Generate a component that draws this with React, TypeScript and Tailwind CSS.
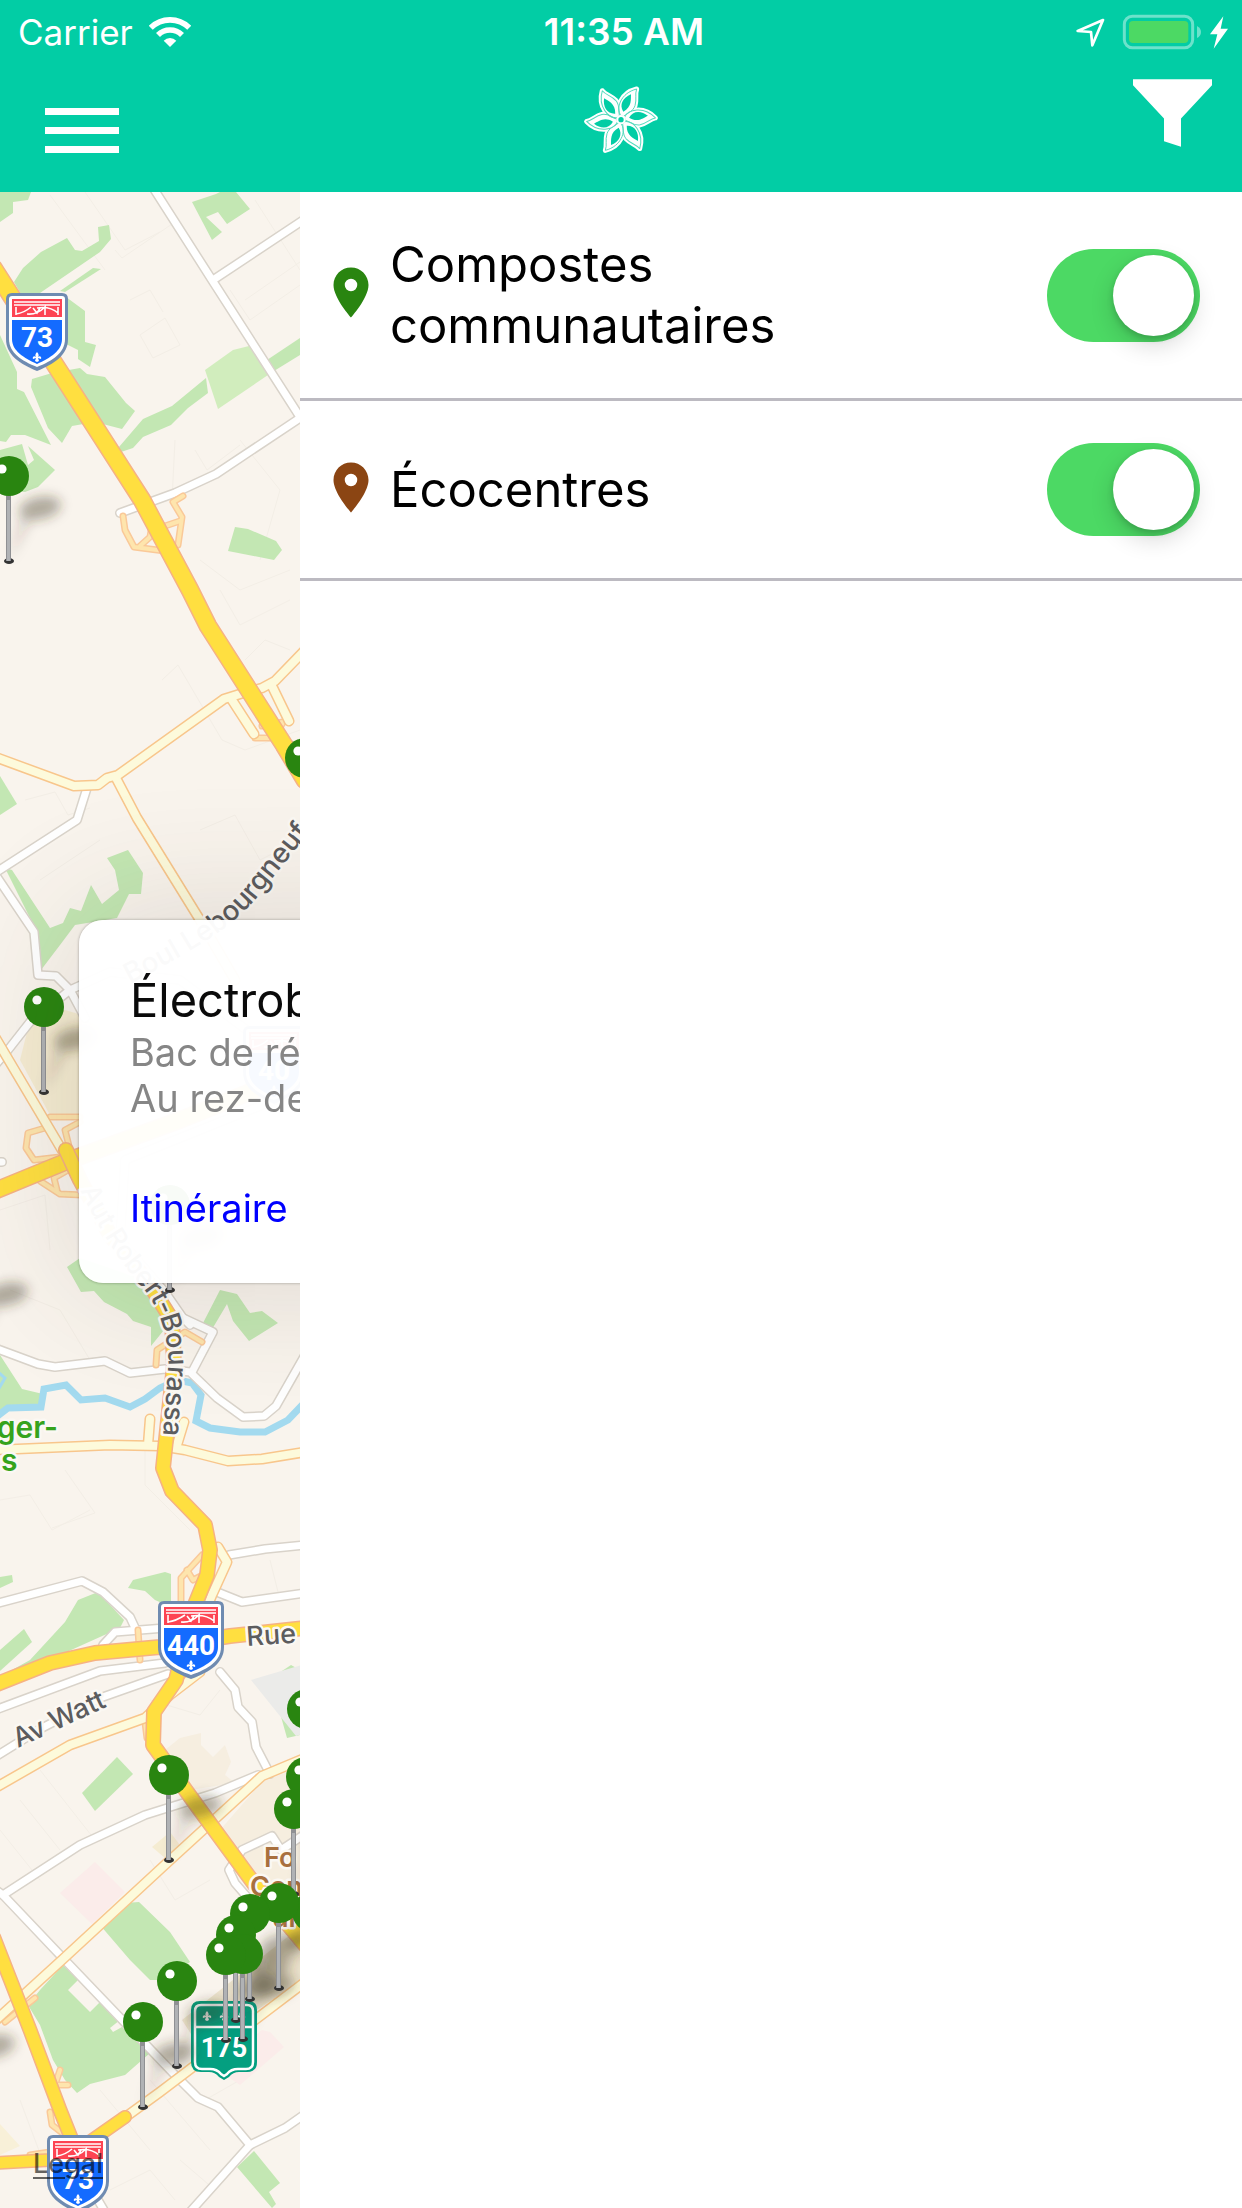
import { useState } from 'react';

const layers = [
  { id: 'composts', name: 'Compostes communautaires', color: '#298510', row: 'h-[209px]' },
  { id: 'ecocentres', name: 'Écocentres', color: '#8b4513', row: 'h-[180px]' },
];

const parks = [
  '0,192 31,192 28,200 13,202 13,213 0,222',
  '14,282 23,268 41,252 67,238 75,250 82,251 99,241 98,227 109,225 111,239 100,252 40,293 22,296',
  '60,291 93,268 101,269 65,292',
  '66,297 85,311 85,342 96,345 90,367 78,359 78,350 66,344',
  '0,335 17,372 17,389 24,392 51,445 25,435 11,435 6,442 0,441',
  '32,379 52,373 80,368 87,374 105,377 126,403 135,411 122,429 95,422 72,426 62,443 48,428 31,387',
  '119,447 143,419 172,406 206,378 208,393 188,408 171,425 143,437 133,448 121,452',
  '267,360 300,338 300,355 274,371',
  '192,202 216,194 220,192 236,192 250,209 227,224 218,212 206,217 222,232 212,240',
  '235,527 248,529 276,541 282,550 274,560 228,551',
  '0,450 22,444 28,465 34,460 28,446 55,470 38,487 25,492 0,490',
  '0,776 17,804 0,815',
  '5,868 12,870 50,928 63,923 70,908 81,911 91,885 102,904 119,890 115,870 107,858 128,850 143,873 141,894 129,894 117,918 75,925 60,945 41,970 36,930',
  '67,1267 80,1258 130,1275 150,1285 168,1325 151,1346 151,1327 133,1321 127,1314 104,1302 94,1291 81,1292',
  '203,1323 220,1290 237,1294 250,1313 262,1311 278,1323 249,1341 233,1321 227,1304 211,1331',
  '0,1355 22,1389 43,1394 41,1408 12,1405 0,1415',
  '0,1577 12,1575 13,1582 0,1588',
  '128,1588 133,1580 165,1572 171,1574 171,1607 155,1600 145,1591',
  '65,1622 78,1600 98,1592 124,1620 120,1628 60,1655 40,1662 12,1670 30,1660',
  '0,1650 24,1629 32,1642 0,1671',
  '82,1793 117,1757 133,1774 95,1811',
  '280,1713 300,1720 300,1735 287,1738',
  '282,1671 291,1665 300,1670 300,1685',
  '100,1925 125,1903 139,1902 170,1932 190,1962 175,1972 165,1980 150,1980 130,1960',
  '63,1965 78,1980 68,1990 90,2012 100,2002 120,2020 110,2028 113,2032 122,2027 150,2053 125,2075 90,2084 77,2093 65,2080 53,2060 40,2025 28,2005 40,1990',
  '237,2167 254,2151 280,2183 269,2192 276,2204 272,2208',
];

const sideStreets = [
  '50,195 105,270', '85,192 125,250 160,232', '115,250 122,258 175,222 195,250', '140,335 165,318 180,345 153,358 140,335',
  '130,300 150,290 163,312', '255,200 300,270', '245,300 300,262', '230,290 250,320 300,285', '175,440 172,500', '195,450 207,470 240,445',
  '240,440 280,490 260,560', '200,560 240,590 290,570', '162,680 178,665 222,740 245,750 300,730', '220,590 240,625 290,600',
  '245,660 265,640 290,650', '25,800 55,792 68,815 90,808', '40,880 100,840', '200,830 235,815 260,860 300,840', '0,1210 45,1195 50,1250',
  '10,1290 60,1310 90,1360', '0,1500 30,1495 52,1530 90,1510', '65,1470 95,1513 52,1528', '145,1440 145,1485 190,1530',
  '20,1800 60,1850', '40,1770 95,1840', '150,1860 175,1900 210,1880', '0,1830 40,1880', '150,1700 200,1715 220,1690', '270,1560 280,1600',
  '150,2080 210,2150', '180,2160 215,2190', '205,2100 240,2080', '20,2100 50,2180', '100,2090 150,2150', '110,2190 150,2170 175,2200',
];

const streets = [
  '152,186 212,280 300,417', '213,280 305,219', '306,414 216,474 175,493 120,513',
  '87,788 77,820 -5,873', '-5,874 34,932 38,975 56,976 70,990 85,1018', '70,990 30,1022 8,1050 -4,1064',
  '70,990 110,972 180,980 300,1070', '0,1162 2,1162', '190,1325 183,1318 165,1292 120,1240 125,1160 200,1130 300,1090',
  '-5,1348 38,1364 55,1367 105,1361 130,1373 165,1369 190,1372 217,1398 243,1417 264,1416 276,1406 305,1355',
  '192,1372 213,1332 183,1318',
  '-5,1604 82,1581 103,1592 130,1617 136,1630', '165,1628 115,1632 103,1645', '229,1555 265,1549 305,1545', '217,1592 242,1602 305,1593',
  '-5,1710 100,1671 165,1663', '-5,1757 40,1729 100,1698 168,1674', '220,1672 235,1690 238,1707 252,1722 256,1747 270,1774',
  '258,1775 215,1793 145,1815 80,1845 3,1895', '-4,1890 3,1895 60,1955 175,2075 198,2098 218,2107 250,2145 190,2212', '250,2145 285,2128 305,2114',
  '248,1898 235,1883 229,1870 242,1850 272,1836 281,1850 305,1834', '95,2195 105,2212',
];

const creamRoads = [
  '-5,757 74,786 98,785 107,778 118,775 224,699 240,694 262,688 275,681 305,650', '116,778 137,818 200,920 235,980',
  '232,700 254,734', '272,686 289,721', '-5,1037 62,1150',
  '-5,1450 110,1445 160,1446 185,1450 228,1461 262,1459 305,1452', '150,1419 148,1445', '184,1422 177,1445',
  '218,1547 227,1562 212,1595 208,1605', '-5,1788 70,1745 145,1718 170,1695 200,1672',
  '305,1758 262,1776 168,1862 63,1959 -5,2021', '120,2121 160,2092 305,1982',
];

const ramps = [
  '123,516 125,530 134,547 165,551', '183,496 173,502 182,517 178,545', '140,546 150,537 152,525', '165,526 180,521',
  '255,738 275,738 283,722 262,726', '50,1117 80,1117', '45,1128 28,1133 26,1148 34,1160 60,1157', '80,1122 65,1130 70,1150',
  '40,1181 60,1194 82,1195', '57,1190 54,1178 68,1170', '156,1365 157,1350 185,1332 202,1342', '202,1555 181,1578 181,1605',
  '187,1570 193,1580 205,1574', '138,1630 140,1660', '145,1722 147,1738', '5,2022 35,1998', '60,2070 55,2085 68,2085',
  '50,2112 52,2125 65,2135', '30,2155 50,2152',
];

const highways = [
  { width: 16, points: '-6,269 54,363 142,500 190,590 208,626 284,745 305,780' },
  { width: 15, points: '-8,1192 70,1160 180,1120 305,1070' },
  { width: 13, points: '66,1150 80,1180 110,1235 150,1285 172,1320 174,1365 167,1430 163,1468 172,1491 205,1525 210,1550 207,1575 192,1612 176,1680 154,1712 153,1745 200,1810 255,1885 305,1945' },
  { width: 13, points: '-8,1686 50,1663 95,1653 160,1647 230,1636 305,1628' },
  { width: 12, points: '-6,1938 30,2030 60,2110 80,2160' },
  { width: 11, points: '-6,2163 50,2160 85,2145 125,2117' },
];

const pins = [
  [9, 476], [305, 758], [44, 1007], [170, 1205], [307, 1709], [306, 1777], [294, 1809], [169, 1775],
  [312, 1912], [279, 1903], [250, 1914], [236, 1935], [243, 1954], [226, 1955], [177, 1981], [143, 2022],
];

function Roads({ lines, width, color, casing }: { lines: string[]; width: number; color: string; casing: string }) {
  return (
    <g fill="none" strokeLinejoin="round" strokeLinecap="round">
      {lines.map(l => <polyline key={'c' + l} points={l} stroke={casing} strokeWidth={width + 3} />)}
      {lines.map(l => <polyline key={l} points={l} stroke={color} strokeWidth={width} />)}
    </g>
  );
}

function Pin({ x, y }: { x: number; y: number }) {
  return (
    <g>
      <ellipse cx={x} cy={y + 85} rx="5" ry="3" fill="#333" />
      <rect x={x - 3} y={y + 18} width="5" height="67" fill="#8f9093" />
      <rect x={x - 2} y={y + 24} width="3" height="61" fill="#b0b2b5" />
      <circle cx={x} cy={y} r="20" fill="#298510" />
      <circle cx={x - 7} cy={y - 7} r="4.6" fill="#fff" />
    </g>
  );
}

function Fleur({ x, y }: { x: number; y: number }) {
  return <path transform={`translate(${x} ${y})`} d="M0-5C2-3 2-1 1 0C3-2 5 0 4 2L1 1L2 4L0 5L-2 4L-1 1L-4 2C-5 0-3-2-1 0C-2-1-2-3 0-5Z" fill="#fff" />;
}

function AutorouteShield({ x, y, width = 62, label }: { x: number; y: number; width?: number; label: string }) {
  const r = width;
  const m = width / 2;
  return (
    <g transform={`translate(${x} ${y})`}>
      <path d={`M6 0H${r - 6}Q${r} 0 ${r} 6V46C${r} 62 ${r - 14} 71 ${m} 78C14 71 0 62 0 46V6Q0 0 6 0Z`} fill="#6f8bb1" />
      <path d={`M6 3H${r - 6}Q${r - 3} 3 ${r - 3} 6V46C${r - 3} 60 ${r - 16} 68 ${m} 74C16 68 3 60 3 46V6Q3 3 6 3Z`} fill="#fff" />
      <rect x="6" y="6" width={r - 12} height="18" fill="#fd4453" />
      <path d={`M8 9H${r - 8}M8 12H${r - 8}M10 22V14M${r - 10} 22V14M10 21Q18 20 ${m - 6} 14M${r - 10} 20Q${r - 18} 13 ${m} 15M${m - 10} 21Q${m} 22 ${m + 8} 14V22M${m - 4} 15L${m} 20L${m + 3} 15`} stroke="#fff" strokeWidth="1.6" fill="none" />
      <path d={`M6 27H${r - 6}V46C${r - 6} 58 ${r - 18} 65 ${m} 71C18 65 6 58 6 46Z`} fill="#146bff" />
      <text x={m} y="54" textAnchor="middle" className="fill-white text-[28px] font-bold [font-family:Roboto,sans-serif]">{label}</text>
      <Fleur x={m} y={64} />
    </g>
  );
}

function MapCanvas() {
  return (
    <svg viewBox="0 192 300 2016" preserveAspectRatio="xMinYMin slice" className="absolute inset-0 h-full w-full" aria-hidden="true">
      <defs>
        <filter id="blur" x="-50%" y="-80%" width="200%" height="260%"><feGaussianBlur stdDeviation="6" /></filter>
        <path id="lebourgneuf" d="M130 984C188 953 235 928 262 891L325 813" />
        <path id="bourassa" d="M80 1190C100 1232 120 1262 140 1285C160 1305 171 1345 168 1370L162 1450" />
      </defs>
      <rect y="192" width="300" height="2016" fill="#f9f4ed" />
      <g fill="none" stroke="#f3eee6" strokeWidth="1">
        {sideStreets.map(s => <polyline key={s} points={s} />)}
      </g>
      <polygon points="30,1020 65,1010 82,1015 82,1115 50,1115 20,1060" fill="#f5ecd2" />
      <polygon points="165,1750 180,1738 201,1733 201,1745 213,1757 225,1745 231,1762 225,1775 235,1783 190,1790" fill="#f6eee0" />
      <polygon points="305,1765 262,1782 220,1830 250,1870 305,1930" fill="#f6eedf" />
      <polygon points="152,1847 170,1832 180,1845 165,1858" fill="#f5ecd2" />
      <polygon points="182,2020 290,1935 305,1935 305,1978 200,2048" fill="#ece3cd" />
      <polygon points="0,2124 20,2146 0,2155" fill="#f8f0d8" />
      {parks.map(p => <polygon key={p} points={p} fill="#c3e7b3" />)}
      <polygon points="205,370 233,350 249,346 268,375 218,409" fill="#d1edbd" />
      <polygon points="251,1680 305,1664 305,1733 296,1736" fill="#ebebe9" />
      <polygon points="60,1893 95,1862 125,1892 92,1924" fill="#fbecea" />
      <polygon points="215,2068 262,2030 270,2032 284,2047 240,2085" fill="#fbecea" />
      <polyline points="-4,1417 8,1408 41,1407 44,1389 66,1385 81,1400 105,1398 130,1407 145,1399 160,1388 178,1380 192,1383 201,1395 196,1421 210,1428 240,1432 265,1432 288,1420 305,1402" fill="none" stroke="#a3daef" strokeWidth="7" />
      <polyline points="-2,1372 5,1378 -2,1390" fill="none" stroke="#a3daef" strokeWidth="3" />
      <Roads lines={streets} width={7} color="#fff" casing="#d9d3ca" />
      <Roads lines={ramps} width={4} color="#fee5ad" casing="#fac999" />
      <Roads lines={creamRoads} width={8} color="#fdfadb" casing="#f8c68c" />
      {highways.map(h => <Roads key={h.points} lines={[h.points]} width={h.width} color="#ffdf40" casing="#f6b283" />)}

      <g strokeLinejoin="round" stroke="#fbf8f3" strokeWidth="5" className="text-[27px] font-medium [paint-order:stroke]" fill="#5c5c5e">
        <text className="text-[28px]"><textPath href="#lebourgneuf">Boul Lebourgneuf</textPath></text>
        <text><textPath href="#bourassa">Aut Robert-Bourassa</textPath></text>
        <text transform="translate(18 1748) rotate(-25)">Av Watt</text>
        <text transform="translate(247 1646) rotate(-4)">Rue</text>
        <g fill="#35a31c" className="text-[30px] font-semibold">
          <text x="58" y="1438" textAnchor="end">ger-</text>
          <text x="1" y="1471">s</text>
        </g>
        <g fill="#a8703f" className="font-semibold">
          <text x="264" y="1867">Fo</text>
          <text x="250" y="1896">Con</text>
          <text x="272" y="1927">ur</text>
        </g>
      </g>

      <AutorouteShield x={6} y={293} label="73" />
      <AutorouteShield x={243} y={1026} label="40" />
      <AutorouteShield x={158} y={1601} width={66} label="440" />
      <AutorouteShield x={47} y={2135} label="73" />
      <g transform="translate(191 2001)">
        <path d="M9 0H57Q66 0 66 9V61Q66 71 56 71H48Q42 71 38 76L33 79L28 76Q24 71 18 71H10Q0 71 0 61V9Q0 0 9 0Z" fill="#049f80" />
        <path d="M10 4H56Q62 4 62 10V61Q62 68 55 68H47Q40 68 36 73L33 75L30 73Q26 68 19 68H11Q4 68 4 61V10Q4 4 10 4ZM4 26H62" fill="none" stroke="#fff" strokeWidth="2.5" />
        <Fleur x={16} y={15} /><Fleur x={33} y={15} /><Fleur x={50} y={15} />
        <text x="33" y="56" textAnchor="middle" className="fill-white text-[27px] font-bold [font-family:Roboto,sans-serif]">175</text>
      </g>

      <g filter="url(#blur)" fill="#3b3420">
        {[...pins, [-24, 1262], [-37, 2014]].map(([x, y]) => (
          <g key={`${x}-${y}`}>
            <ellipse cx={x + 31} cy={y + 32} rx="21" ry="11" opacity="0.38" transform={`rotate(-12 ${x + 31} ${y + 32})`} />
            <path d={`M${x} ${y + 85}L${x + 12} ${y + 40}L${x + 24} ${y + 42}Z`} opacity="0.16" />
          </g>
        ))}
      </g>
      {pins.map(([x, y]) => <Pin key={`${x}-${y}`} x={x} y={y} />)}
    </svg>
  );
}

const petal = 'M139 110C122 88 138 42 186 30C180 46 187 60 181 80C175 98 160 100 147 112Z';
const petalCore = 'M146 98C133 78 144 56 169 46C168 60 173 84 146 98Z';
const angles = [0, 60, 120, 180, 240, 300];

function FlowerLogo() {
  return (
    <svg viewBox="-5 0 288 246" className="h-[82px] w-[96px]" role="img" aria-label="Accueil">
      {angles.map(a => <path key={a} d={petal} transform={`rotate(${a} 139 122)`} fill="#fff" stroke="#fff" strokeWidth="15" strokeLinejoin="round" />)}
      {angles.map(a => <path key={a} d={petal} transform={`rotate(${a} 139 122)`} fill="none" stroke="#55dabd" strokeWidth="3" strokeLinejoin="round" />)}
      {angles.map(a => <path key={a} d={petalCore} transform={`rotate(${a} 139 122)`} fill="#02cda5" />)}
      <circle cx="139" cy="122" r="14" fill="#fff" />
      <circle cx="139" cy="122" r="8" fill="#02cda5" />
    </svg>
  );
}

function StatusBar() {
  return (
    <div className="grid h-[63px] grid-cols-3 items-center pl-[18px] pr-3 text-[37px] leading-[44px]">
      <div className="flex items-center gap-4">
        <span className="text-[35px]">Carrier</span>
        <svg viewBox="0 0 126 91" className="h-[30px] w-[42px]" fill="none" stroke="#fff" strokeWidth="17">
          <path d="M4.7 32.7A82.5 82.5 0 0 1 121.3 32.7" />
          <path d="M26.6 54.6A51.5 51.5 0 0 1 99.4 54.6" />
          <path d="M63 91L43.9 71.9A27 27 0 0 1 82.1 71.9Z" fill="#fff" stroke="none" />
        </svg>
      </div>
      <span className="text-center font-semibold">11:35 AM</span>
      <svg viewBox="45 36 462 108" className="h-[36px] w-[154px] justify-self-end">
        <path d="M126 54L50 87L90 90L94 130Z" fill="none" stroke="#fff" strokeWidth="8" strokeLinejoin="round" />
        <rect x="190" y="43" width="205" height="94" rx="24" fill="none" stroke="#fff" strokeWidth="9" opacity="0.42" />
        <rect x="204" y="57" width="178" height="66" rx="12" fill="#4cd964" />
        <path d="M408 72Q420 78 420 90T408 108Z" fill="#fff" opacity="0.42" />
        <path d="M487 43L447 97H469L458 140L501 80H479Z" fill="#fff" />
      </svg>
    </div>
  );
}

export default function App() {
  const [enabled, setEnabled] = useState<Record<string, boolean>>({ composts: true, ecocentres: true });

  const toggle = (id: string) => {
    setEnabled(prev => ({ ...prev, [id]: !prev[id] }));
  };

  return (
    <div className="flex min-h-screen flex-col bg-white text-black [font-family:Inter,sans-serif]">
      <header className="bg-[#02cda5] text-white">
        <StatusBar />
        <nav className="grid h-[129px] grid-cols-3 items-start px-[30px]">
          <button type="button" aria-label="Menu" className="ml-[15px] mt-[45px] flex w-[74px] flex-col gap-3">
            <span className="h-[7px] w-full bg-white" />
            <span className="h-[7px] w-full bg-white" />
            <span className="h-[7px] w-full bg-white" />
          </button>
          <div className="mt-4 flex justify-center">
            <FlowerLogo />
          </div>
          <button type="button" aria-label="Filtrer" className="mt-4 justify-self-end">
            <svg viewBox="219 238 237 203" className="h-[68px] w-[79px]">
              <path d="M219 238H456V256L363 356V441L312 424V356L219 256Z" fill="#fff" />
            </svg>
          </button>
        </nav>
      </header>

      <div className="flex flex-1">
        {/* Map strip left visible beside the drawer */}
        <section className="relative w-[300px] shrink-0 overflow-hidden">
          <MapCanvas />
          <article className="absolute left-[79px] top-[728px] h-[363px] w-[600px] whitespace-nowrap rounded-3xl bg-white/97 pl-[51px] pt-[51px] shadow-[0_0_3px_rgba(0,0,0,0.35),0_0_140px_rgba(60,50,40,0.16)]">
            <h2 className="text-[47px] leading-[58px] text-[#0a0a0a]">Électrob</h2>
            <p className="text-[38px] leading-[46px] text-[#868686]">Bac de ré</p>
            <p className="text-[38px] leading-[46px] text-[#868686]">Au rez-de</p>
            <a href="#itineraire" className="mt-16 block text-[38px] leading-[46px] text-[#0000ff]">Itinéraire</a>
          </article>
          <a href="#legal" className="absolute bottom-[28px] left-[33px] text-[27px] leading-[32px] font-medium text-black/60 underline underline-offset-4">Legal</a>
        </section>

        <main className="min-w-0 flex-1">
          {layers.map(layer => (
            <div key={layer.id} className={`flex items-center border-b-3 border-[#bcbac1] pl-[21px] pr-[42px] ${layer.row}`}>
              <svg viewBox="0 0 24 24" className="h-[60px] w-[60px] shrink-0" fill={layer.color}>
                <path d="M12 1C8.130 1 5 4.130 5 8c0 5.250 7 13 7 13s7-7.750 7-13c0-3.870-3.130-7-7-7zm0 9.500a2.500 2.500 0 1 1 0-5 2.500 2.500 0 0 1 0 5z" />
              </svg>
              <label htmlFor={layer.id} className="flex-1 pl-[9px] pr-16 text-[49px] leading-[61px]">{layer.name}</label>
              <input
                id={layer.id}
                type="checkbox"
                role="switch"
                checked={enabled[layer.id]}
                onChange={() => toggle(layer.id)}
                className="flex h-[93px] w-[153px] shrink-0 cursor-pointer appearance-none rounded-full bg-gray-200 p-[6px] before:h-[81px] before:w-[81px] before:rounded-full before:bg-white before:shadow-[0_9px_24px_rgba(0,0,0,0.16),0_3px_6px_rgba(0,0,0,0.16)] before:content-[''] checked:justify-end checked:bg-[#4cd964]"
              />
            </div>
          ))}
        </main>
      </div>
    </div>
  );
}
